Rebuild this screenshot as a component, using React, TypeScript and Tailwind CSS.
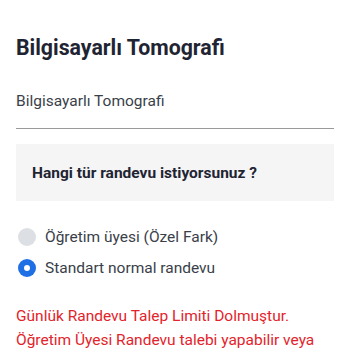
const options = [
  { label: 'Öğretim üyesi (Özel Fark)', selected: false },
  { label: 'Standart normal randevu', selected: true },
];

function Radio({ selected }: { selected: boolean }) {
  if (selected) {
    return (
      <span className="flex h-[18px] w-[18px] shrink-0 items-center justify-center rounded-full bg-[#1f6fe5]">
        <span className="h-[6px] w-[6px] rounded-full bg-white" />
      </span>
    );
  }
  return <span className="h-[18px] w-[18px] shrink-0 rounded-full bg-[#dcdfe3]" />;
}

export default function App() {
  return (
    <div className="h-[350px] w-[350px] overflow-hidden bg-white px-4 pt-[34px] font-['Roboto',sans-serif]">
      <h1 className="text-[21.3px] font-bold leading-[28px] text-[#1f2433]">Bilgisayarlı Tomografi</h1>

      <div className="mt-[27px] border-b border-[#9a9a9a] pb-[15px] text-[15.5px] leading-[24px] text-[#3a3f4a]">
        Bilgisayarlı Tomografi
      </div>

      <div className="mt-[15px] bg-[#f5f5f5] px-4 pb-[16px] pt-[17px]">
        <p className="text-[15.5px] font-bold leading-[24px] text-[#1f2433]">Hangi tür randevu istiyorsunuz ?</p>
      </div>

      <div className="mt-[24px] flex flex-col gap-[7px]">
        {options.map((o) => (
          <label key={o.label} className="flex h-[24px] items-center gap-[9px] pl-[2px]">
            <Radio selected={o.selected} />
            <span className="text-[15.5px] leading-[24px] text-[#3a3f4a]">{o.label}</span>
          </label>
        ))}
      </div>

      <p className="mt-[24px] text-[15.5px] leading-[24px] text-[#e3232b]">
        Günlük Randevu Talep Limiti Dolmuştur.
        <br />
        Öğretim Üyesi Randevu talebi yapabilir veya
      </p>
    </div>
  );
}
